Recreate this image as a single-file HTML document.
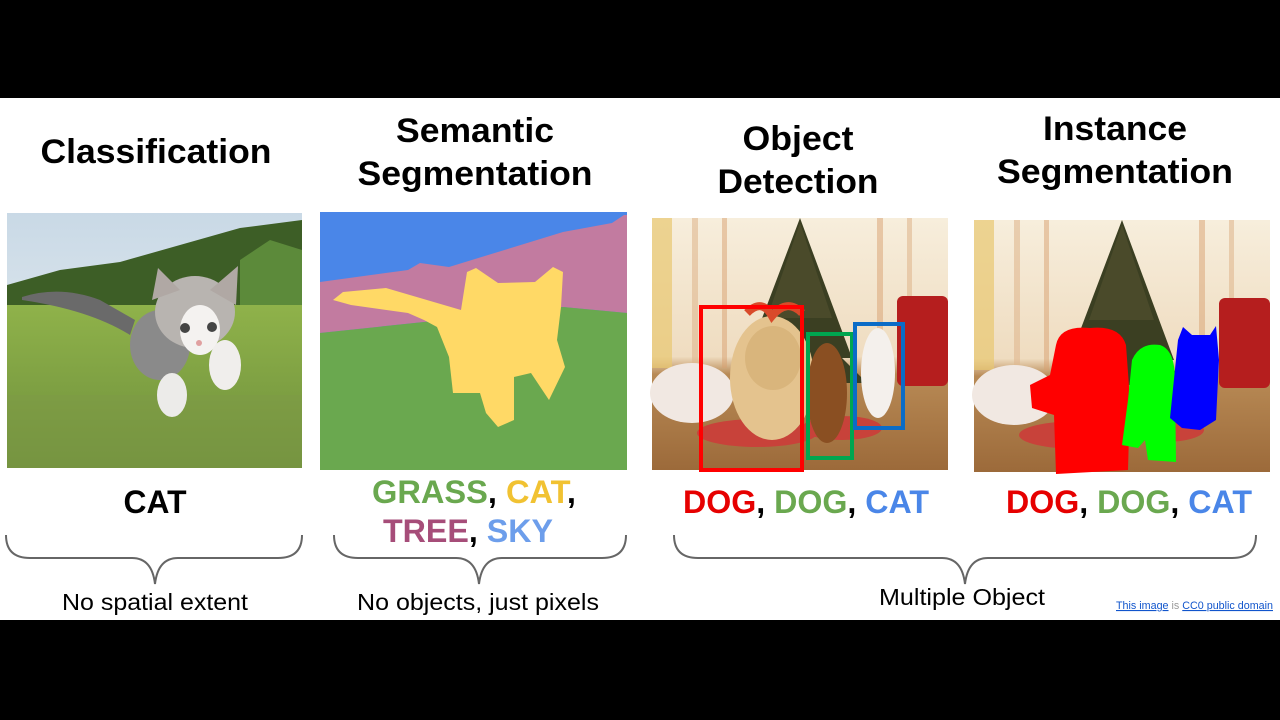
<!DOCTYPE html>
<html><head><meta charset="utf-8"><style>
html,body{margin:0;padding:0;background:#000;width:1280px;height:720px;overflow:hidden}
svg{display:block}
text{font-family:"Liberation Sans",Arial,sans-serif}
.t{font-size:34px;font-weight:bold;fill:#000;text-anchor:middle}
.l{font-size:32px;font-weight:bold;text-anchor:middle}
.s{font-size:23px;fill:#000;text-anchor:middle}
</style></head><body>
<svg width="1280" height="720" viewBox="0 0 1280 720">
<defs>
<linearGradient id="sky" x1="0" y1="0" x2="0" y2="1"><stop offset="0" stop-color="#c9d9e6"/><stop offset="1" stop-color="#eef2f2"/></linearGradient>
<linearGradient id="grass" x1="0" y1="0" x2="0" y2="1"><stop offset="0" stop-color="#8fb24a"/><stop offset="1" stop-color="#6e8f3c"/></linearGradient>
<linearGradient id="room" x1="0" y1="0" x2="0" y2="1"><stop offset="0" stop-color="#f7eedc"/><stop offset="0.55" stop-color="#efdcc0"/><stop offset="0.62" stop-color="#b88a55"/><stop offset="1" stop-color="#9c6a3a"/></linearGradient>
<g id="scene">
<rect x="0" y="0" width="296" height="252" fill="url(#room)"/>
<rect x="0" y="0" width="20" height="150" fill="#e8c870" opacity=".7"/>
<rect x="40" y="0" width="6" height="150" fill="#e0b890" opacity=".6"/>
<rect x="70" y="0" width="5" height="150" fill="#d8a070" opacity=".5"/>
<rect x="225" y="0" width="6" height="150" fill="#d8a070" opacity=".5"/>
<rect x="255" y="0" width="5" height="150" fill="#e0b890" opacity=".6"/>
<polygon points="148,0 95,140 105,140 80,165 215,165 190,140 200,140" fill="#3b3f22"/>
<polygon points="148,5 115,100 180,100" fill="#4a4a2a"/>
<rect x="245" y="78" width="51" height="90" rx="6" fill="#b51e1e"/>
<ellipse cx="40" cy="175" rx="42" ry="30" fill="#f1e8e2"/>
<ellipse cx="105" cy="215" rx="60" ry="14" fill="#c8423a"/>
<ellipse cx="190" cy="210" rx="40" ry="12" fill="#c8423a"/>
</g>
</defs>
<rect x="0" y="98" width="1280" height="522" fill="#fff"/>

<!-- titles -->
<text class="t" x="156" y="163" textLength="231" lengthAdjust="spacingAndGlyphs">Classification</text>
<text class="t" x="475" y="142" textLength="158" lengthAdjust="spacingAndGlyphs">Semantic</text>
<text class="t" x="475" y="185" textLength="235" lengthAdjust="spacingAndGlyphs">Segmentation</text>
<text class="t" x="798" y="150" textLength="111" lengthAdjust="spacingAndGlyphs">Object</text>
<text class="t" x="798" y="193" textLength="161" lengthAdjust="spacingAndGlyphs">Detection</text>
<text class="t" x="1115" y="140" textLength="144" lengthAdjust="spacingAndGlyphs">Instance</text>
<text class="t" x="1115" y="183" textLength="236" lengthAdjust="spacingAndGlyphs">Segmentation</text>

<!-- cat photo -->
<g>
<rect x="7" y="213" width="295" height="255" fill="url(#sky)"/>
<polygon points="7,285 60,270 120,262 180,245 240,228 302,220 302,310 7,320" fill="#3d5e26"/>
<polygon points="240,260 270,240 302,250 302,315 240,315" fill="#5c8a3a"/>
<rect x="7" y="305" width="295" height="163" fill="url(#grass)"/>
<rect x="7" y="395" width="295" height="73" fill="#7d9a45" opacity=".5"/>
<path d="M22,297 Q60,285 100,300 L135,320 L130,335 Q90,310 22,300 Z" fill="#6a6a6a"/>
<ellipse cx="160" cy="345" rx="30" ry="35" fill="#8a8a8a"/>
<ellipse cx="195" cy="312" rx="40" ry="36" fill="#b8b4b0"/>
<polygon points="152,300 158,268 180,290" fill="#b0a8a4"/>
<polygon points="210,290 238,266 236,305" fill="#b0a8a4"/>
<ellipse cx="200" cy="330" rx="20" ry="25" fill="#f4f2f0"/>
<ellipse cx="225" cy="365" rx="16" ry="25" fill="#f0eeec"/>
<ellipse cx="172" cy="395" rx="15" ry="22" fill="#ecebe9"/>
<circle cx="185" cy="328" r="5" fill="#444"/><circle cx="212" cy="327" r="5" fill="#444"/>
<circle cx="199" cy="343" r="3" fill="#e0a0a0"/>
</g>

<!-- semantic -->
<g>
<rect x="320" y="212" width="307" height="258" fill="#4a86e8"/>
<polygon points="320,282 408,270 420,263 449,267 563,232 612,223 624,215 627,215 627,313 563,307 424,322 320,333" fill="#c27ba0"/>
<polygon points="320,333 424,322 563,307 627,313 627,470 320,470" fill="#6aa84f"/>
<polygon points="333,300 343,292 386,288 461,310 467,272 476,268 498,283 535,282 553,267 563,272 561,307 557,340 565,367 549,400 531,373 514,377 514,420 498,427 486,413 480,393 453,393 449,357 437,327 424,320 408,313 351,305" fill="#ffd966"/>
</g>

<!-- detection -->
<g transform="translate(652,218)"><use href="#scene"/>
<ellipse cx="120" cy="160" rx="42" ry="62" fill="#e4c38e"/>
<ellipse cx="121" cy="140" rx="28" ry="32" fill="#d9b57c"/>
<ellipse cx="175" cy="175" rx="20" ry="50" fill="#8a4f22"/>
<ellipse cx="226" cy="155" rx="17" ry="45" fill="#f4f0ec"/>
<path d="M95,95 Q110,80 120,98 Q135,80 150,95" stroke="#d94a2a" stroke-width="8" fill="none"/>
</g>
<rect x="701" y="307" width="101" height="163" fill="none" stroke="#ff0000" stroke-width="4"/>
<rect x="808" y="334" width="44" height="124" fill="none" stroke="#00a650" stroke-width="4"/>
<rect x="855" y="324" width="48" height="104" fill="none" stroke="#0b6cc7" stroke-width="4"/>

<!-- instance -->
<g transform="translate(974,220)"><use href="#scene"/></g>
<path d="M1056,345 Q1060,325 1090,328 Q1120,325 1126,345 L1130,400 L1128,470 L1056,474 L1054,415 L1032,408 L1030,385 L1050,375 Z" fill="#ff0000"/>
<path d="M1132,360 Q1140,342 1160,345 Q1175,350 1175,380 L1176,462 L1148,460 L1145,440 L1138,448 L1122,445 L1128,400 Z" fill="#00ff00"/>
<path d="M1178,340 L1183,327 L1192,335 L1210,335 L1216,326 L1219,360 L1216,420 L1200,430 L1182,428 L1170,418 Z" fill="#0000ff"/>

<!-- labels -->
<text class="l" x="155" y="513" fill="#000" textLength="63" lengthAdjust="spacingAndGlyphs">CAT</text>
<text class="l" x="474" y="503" textLength="204" lengthAdjust="spacingAndGlyphs"><tspan fill="#6aa84f">GRASS</tspan><tspan fill="#000">, </tspan><tspan fill="#f1c232">CAT</tspan><tspan fill="#000">,</tspan></text>
<text class="l" x="468" y="542" textLength="170" lengthAdjust="spacingAndGlyphs"><tspan fill="#a64d79">TREE</tspan><tspan fill="#000">, </tspan><tspan fill="#6d9eeb">SKY</tspan></text>
<text class="l" x="806" y="513" textLength="246" lengthAdjust="spacingAndGlyphs"><tspan fill="#e60000">DOG</tspan><tspan fill="#000">, </tspan><tspan fill="#6aa84f">DOG</tspan><tspan fill="#000">, </tspan><tspan fill="#4a86e8">CAT</tspan></text>
<text class="l" x="1129" y="513" textLength="246" lengthAdjust="spacingAndGlyphs"><tspan fill="#e60000">DOG</tspan><tspan fill="#000">, </tspan><tspan fill="#6aa84f">DOG</tspan><tspan fill="#000">, </tspan><tspan fill="#4a86e8">CAT</tspan></text>

<!-- braces -->
<g fill="none" stroke="#666" stroke-width="2">
<path d="M6,535 Q6,558 30,558 L132,558 Q152,558 155,584 Q158,558 178,558 L278,558 Q302,558 302,535"/>
<path d="M334,535 Q334,558 358,558 L456,558 Q476,558 479,584 Q482,558 502,558 L602,558 Q626,558 626,535"/>
<path d="M674,535 Q674,558 698,558 L942,558 Q962,558 965,584 Q968,558 988,558 L1232,558 Q1256,558 1256,535"/>
</g>
<text class="s" x="155" y="610" textLength="186" lengthAdjust="spacingAndGlyphs">No spatial extent</text>
<text class="s" x="478" y="610" textLength="242" lengthAdjust="spacingAndGlyphs">No objects, just pixels</text>
<text class="s" x="962" y="605" textLength="166" lengthAdjust="spacingAndGlyphs">Multiple Object</text>
<text x="1116" y="609" font-size="11" fill="#999" textLength="157" lengthAdjust="spacingAndGlyphs"><tspan fill="#1155cc" text-decoration="underline">This image</tspan> is <tspan fill="#1155cc" text-decoration="underline">CC0 public domain</tspan></text>
</svg>
</body></html>
